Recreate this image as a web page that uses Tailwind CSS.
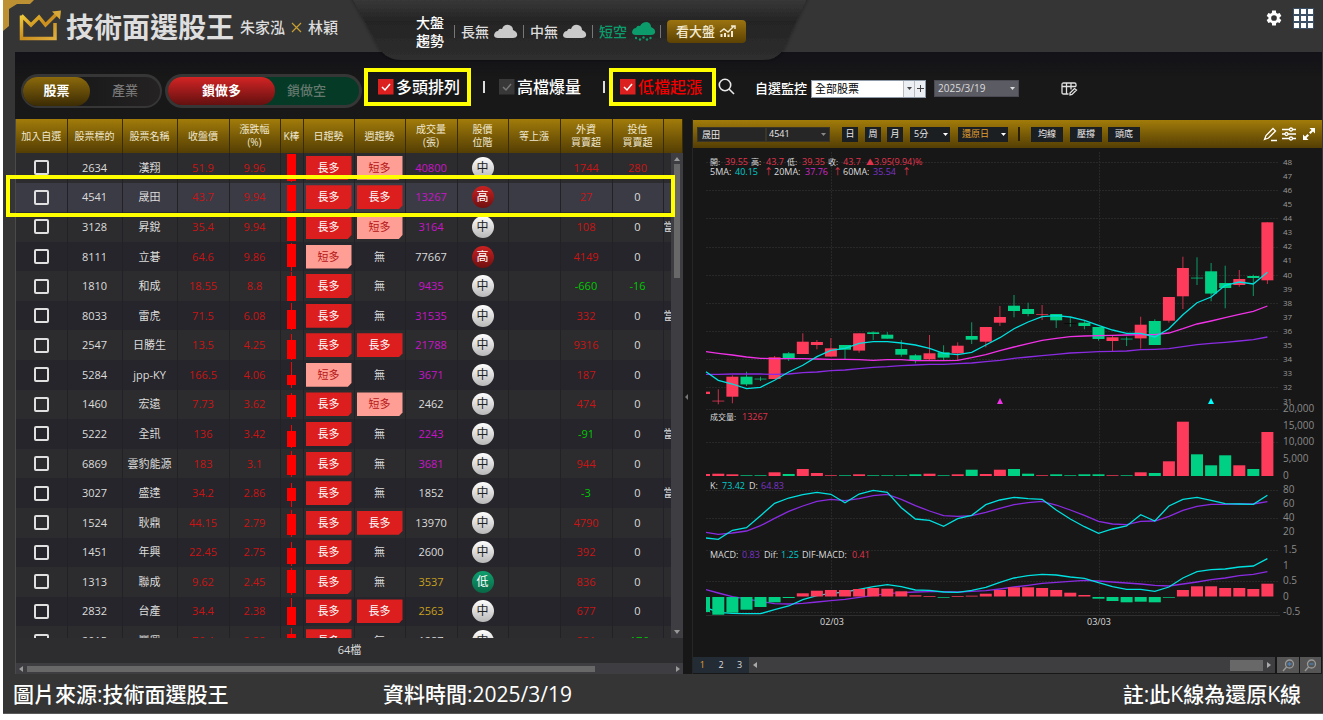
<!DOCTYPE html>
<html lang="zh-Hant">
<head>
  <meta charset="UTF-8">
  <meta name="viewport" content="width=device-width, initial-scale=1.0">
  <title>技術面選股王</title>
  <script src="https://cdn.jsdelivr.net/npm/@tailwindcss/browser@4"></script>
</head>
<body class="bg-white font-['Open_Sans','Noto_Sans_CJK_TC',sans-serif] text-[#dcdcdc]">
  <div class="relative flex flex-col h-screen pb-[6px] pl-[3px]">
    <div class="relative flex flex-col flex-1 min-h-0 bg-[#353535] border-b border-[#5a5a5a]">

      <!-- Header -->
      <header class="relative flex items-center h-[52px] shrink-0 pl-4 pr-[9px]">
        <svg class="absolute left-0 top-0" width="32" height="32" viewBox="0 0 32 32">
          <defs>
            <linearGradient id="gold" x1="0" y1="0" x2="1" y2="1">
              <stop offset="0" stop-color="#f4d03c"/><stop offset=".5" stop-color="#c98d1c"/><stop offset="1" stop-color="#e0b040"/>
            </linearGradient>
          </defs>
          <path d="M0 0H31L27 4H14L6 9V26L0 31Z" fill="#bd9034"/>
        </svg>
        <svg width="43" height="32" viewBox="0 0 43 32" class="relative">
          <path d="M2.500 5.500V28.500H36V13M2.500 5.500L12 15L20 7L26.500 15L38 3.500" fill="none" stroke="url(#gold)" stroke-width="3.500"/>
          <path d="M33 1.500L42 0.500L41 9.500Z" fill="#d9a93a"/>
        </svg>
        <h1 class="ml-1 pt-[2px] text-[28px] leading-8 font-bold text-[#dedede] whitespace-nowrap">技術面選股王</h1>
        <p class="ml-[6px] pt-[2px] flex items-center text-[15px] font-medium whitespace-nowrap">朱家泓
          <svg class="mx-[6px]" width="11" height="11" viewBox="0 0 11 11"><path d="M1 1L10 10M10 1L1 10" stroke="#c9a030" stroke-width="1.200"/></svg>林穎</p>

        <div class="absolute left-[347px] top-0 w-[464px] h-[62px] z-10">
          <svg class="absolute inset-0" width="464" height="62" viewBox="0 0 464 62">
            <defs>
              <linearGradient id="tray" x1="0" y1="0" x2="0" y2="1">
                <stop offset="0" stop-color="#3b3b3b"/><stop offset=".4" stop-color="#242424"/><stop offset="1" stop-color="#2e2e2e"/>
              </linearGradient>
              <filter id="trayShadow" x="-5%" y="-5%" width="110%" height="115%"><feDropShadow dx="0" dy="0" stdDeviation="2" flood-color="#000" flood-opacity=".45"/></filter>
            </defs>
            <path d="M1 -4L28 46Q35 60 52 60H412Q427 60 433 50L458 -4Z" fill="url(#tray)" filter="url(#trayShadow)"/>
          </svg>
          <div class="relative flex items-center h-[63px] pl-[66px] text-sm font-medium whitespace-nowrap">
            <span class="leading-[18px] text-white">大盤<br>趨勢</span>
            <i class="ml-[10px] w-px h-[13px] bg-[#777]"></i>
            <span class="ml-[6px]">長無</span>
            <svg class="ml-[5px]" width="24" height="15" viewBox="0 0 24 15"><path d="M4 14Q0 14 0 11Q1 7 4 7Q5 4 8 5Q10 0 15 1Q19 2 19 6Q24 8 23 12Q22 14 19 14Z" fill="#c9c9c9"/></svg>
            <i class="ml-[5px] w-px h-[13px] bg-[#777]"></i>
            <span class="ml-[6px]">中無</span>
            <svg class="ml-[5px]" width="24" height="15" viewBox="0 0 24 15"><path d="M4 14Q0 14 0 11Q1 7 4 7Q5 4 8 5Q10 0 15 1Q19 2 19 6Q24 8 23 12Q22 14 19 14Z" fill="#c9c9c9"/></svg>
            <i class="ml-[5px] w-px h-[13px] bg-[#777]"></i>
            <span class="ml-[6px] text-[#0c9c6c]">短空</span>
            <svg class="ml-[5px]" width="24" height="20" viewBox="0 0 24 20"><g fill="#0c9c6c"><path d="M4 13Q0 13 0 10Q1 6 4 6Q5 3 8 4Q10 0 15 0Q19 1 19 5Q24 7 23 11Q22 13 19 13Z"/><circle cx="4" cy="16" r="1.200"/><circle cx="8" cy="17.500" r="1.200"/><circle cx="11.500" cy="15.500" r="1.200"/><circle cx="15" cy="17.500" r="1.200"/><circle cx="18.500" cy="16" r="1.200"/></g></svg>
            <i class="ml-[4px] w-px h-[13px] bg-[#777]"></i>
            <button class="ml-[6px] flex items-center justify-center w-[79px] h-[23px] rounded bg-linear-to-b from-[#9c7410] to-[#5c4204] text-[13px] text-[#f3ead0]">看大盤
              <svg class="ml-1" width="18" height="13" viewBox="0 0 18 13" fill="none" stroke="#f3ead0"><path d="M1 7L5 4L9 7L15 1M12 1H16V4" stroke-width="1.500"/><path d="M2.500 9V12M6 8V12M9.500 9.500V12M13 6V12" stroke-width="2"/></svg>
            </button>
          </div>
        </div>

        <button class="ml-auto pb-4" aria-label="設定">
          <svg width="18" height="18" viewBox="0 0 24 24" fill="#fff"><path d="M19.430 12.980a7.800 7.800 0 0 0 0-1.960l2.400-1.800-2.300-4-2.700 1.200a7.500 7.500 0 0 0-1.900-1.100L14.500 2h-5l-.4 3.300a7.500 7.500 0 0 0-1.900 1.100L4.500 5.200l-2.300 4 2.400 1.800a7.800 7.800 0 0 0 0 2l-2.400 1.800 2.300 4 2.700-1.200a7.500 7.500 0 0 0 1.900 1.100l.4 3.300h5l.4-3.300a7.500 7.500 0 0 0 1.900-1.100l2.700 1.200 2.300-4zM12 15.800a3.800 3.800 0 1 1 0-7.600 3.800 3.800 0 0 1 0 7.600z"/></svg>
        </button>
        <button class="ml-[10px] pb-4" aria-label="選單">
          <svg width="21" height="21" viewBox="0 0 21 21"><path fill="#3d5166" d="M0 0H21V21H0Z"/><path fill="#fff" d="M1 1h5v5h-5zM8 1h5v5h-5zM15 1h5v5h-5zM1 8h5v5h-5zM8 8h5v5h-5zM15 8h5v5h-5zM1 15h5v5h-5zM8 15h5v5h-5zM15 15h5v5h-5z"/></svg>
        </button>
      </header>

      <main class="flex flex-col flex-1 min-h-0 ml-3 mr-[1px] bg-[#171717]">
        <!-- Filters -->
        <div class="flex items-center h-[67px] shrink-0 pt-[10px] pl-[6px] whitespace-nowrap bg-linear-to-b from-[#121218] to-[#181818] to-40%">
          <div class="flex w-[141px] h-[34px] p-[2px] pt-[3px] rounded-full bg-[#363636]">
            <div class="flex flex-1 rounded-full bg-linear-to-r from-[#141414] to-[#242222] text-[13px] font-medium">
              <button class="w-[67px] rounded-full bg-linear-to-b from-[#8c6a0c] to-[#3c2c04] font-bold text-white">股票</button>
              <button class="flex-1 text-[#777]">產業</button>
            </div>
          </div>
          <div class="flex ml-[3px] w-[197px] h-[34px] p-[3px] rounded-full bg-[#363636]">
            <div class="flex flex-1 rounded-full bg-[#043a26] text-[13px] font-medium">
              <button class="w-[107px] rounded-full bg-linear-to-b from-[#d42424] to-[#641010] font-bold text-white">鎖做多</button>
              <button class="px-3 text-[#64786e]">鎖做空</button>
            </div>
          </div>
          <label class="flex items-center ml-[2px] w-[107px] h-[38px] pl-[10px] -mt-2 border-4 border-[#ff0] text-base font-medium text-white">
            <input type="checkbox" checked class="absolute size-[15px] appearance-none">
            <svg class="mr-[2px]" width="16" height="16" viewBox="0 0 16 16"><path d="M0 0H15.500V15.500H0Z" fill="#dc2020"/><path d="M4 8L7 11L12 5" fill="none" stroke="#fff" stroke-width="1.500"/></svg>多頭排列
          </label>
          <i class="ml-3 -mt-2 w-[2px] h-[12px] bg-[#ddd]"></i>
          <label class="flex items-center ml-[14px] -mt-2 text-base font-medium text-white">
            <input type="checkbox" class="absolute size-[15px] appearance-none">
            <svg class="mr-[2px]" width="16" height="16" viewBox="0 0 16 16"><path d="M0 0H15.500V15.500H0Z" fill="#383838"/><path d="M4 8L7 11L12 5" fill="none" stroke="#777" stroke-width="1.500"/></svg>高檔爆量
          </label>
          <i class="ml-[22px] -mt-2 w-[2px] h-[12px] bg-[#ddd]"></i>
          <label class="flex items-center ml-[4px] w-[107px] h-[38px] pl-[7px] -mt-2 border-4 border-[#ff0] text-base font-medium text-[#f00000]">
            <input type="checkbox" checked class="absolute size-[15px] appearance-none">
            <svg class="mr-[2px]" width="16" height="16" viewBox="0 0 16 16"><path d="M0 0H15.500V15.500H0Z" fill="#dc2020"/><path d="M4 8L7 11L12 5" fill="none" stroke="#fff" stroke-width="1.500"/></svg>低檔起漲
          </label>
          <button class="ml-[2px] -mt-2" aria-label="搜尋"><svg width="17" height="17" viewBox="0 0 17 17" fill="none" stroke="#e8e8e8" stroke-width="1.600"><circle cx="7" cy="7" r="5.700"/><path d="M11 11L16 16"/></svg></button>
          <label for="watch" class="ml-[20px] -mt-1 text-[13px] font-medium text-white">自選監控</label>
          <div class="relative flex ml-1 -mt-1 h-[18px] w-[115px] border border-[#8f9aa8] bg-white">
            <select id="watch" class="w-full pl-[3px] appearance-none text-[11px] leading-4 text-black"><option>全部股票</option></select>
            <span class="pointer-events-none absolute right-[11px] inset-y-0 flex items-center justify-center w-[11px] border-l border-[#bbb] bg-[#eceff4]"><svg width="5" height="3"><path d="M0 0H5L2.500 3Z" fill="#444"/></svg></span>
            <button class="absolute right-0 inset-y-0 flex items-center justify-center w-[11px] border-l border-[#bbb] bg-[#eceff4]" aria-label="新增"><svg width="7" height="7"><path d="M0 3.500H7M3.500 0V7" stroke="#444"/></svg></button>
          </div>
          <div class="relative ml-2 -mt-1">
            <select aria-label="日期" class="block w-[85px] h-[17px] pl-[3px] appearance-none border border-[#4a4a52] bg-[#5b5b63] text-[10px] text-[#ddd]"><option>2025/3/19</option></select>
            <svg class="pointer-events-none absolute right-1 top-[7px]" width="5" height="3"><path d="M0 0H5L2.500 3Z" fill="#ddd"/></svg>
          </div>
          <button class="ml-[42px] -mt-1" aria-label="編輯欄位"><svg width="17" height="14" viewBox="0 0 17 14" fill="none" stroke="#e0e0e0" stroke-width="1.300"><path d="M7.500 12H2.500Q1 12 1 10.500V2.500Q1 1 2.500 1H13.500Q15 1 15 2.500V4.500M1 4.500H15M5.500 1V12M10 1V7.500"/><path d="M9 11L13.500 6.500L15.500 8L11 12.500L9 13Z"/></svg></button>
        </div>

        <div class="grid grid-cols-[668fr_639fr] flex-1 min-h-0">
          <!-- Stock list -->
          <section class="relative flex flex-col min-h-0 min-w-0 border-l border-[#4a4a4a] bg-[#2c2c2e]">
            <div class="relative flex-1 min-h-0 overflow-hidden">
              <table class="w-full h-[537px] table-fixed border-collapse text-center text-[11px] leading-[14px]">
                <colgroup>
                  <col class="w-[51px]"><col class="w-[55px]"><col class="w-[55px]"><col class="w-[52px]"><col class="w-[51px]"><col class="w-[23px]"><col class="w-[51px]"><col class="w-[51px]"><col class="w-[52px]"><col class="w-[51px]"><col class="w-[52px]"><col class="w-[52px]"><col class="w-[51px]"><col>
                </colgroup>
                <thead>
                  <tr class="h-[34px] bg-linear-to-b from-[#a27c0a] to-[#543e04] text-[10px] leading-[13px] text-[#f0e8d0] whitespace-nowrap [&>th]:border-r [&>th]:border-[#3a2c04] [&>th]:p-0 [&>th]:font-normal">
                    <th>加入自選</th><th>股票標的</th><th>股票名稱</th><th>收盤價</th><th>漲跌幅<br>(%)</th><th>K棒</th><th>日趨勢</th><th>週趨勢</th><th>成交量<br>(張)</th><th>股價<br>位階</th><th>等上漲</th><th>外資<br>買賣超</th><th>投信<br>買賣超</th><th></th>
                  </tr>
                </thead>
                <tbody id="stocks"></tbody>
              </table>
              <div class="absolute right-0 top-[34px] bottom-0 w-3 flex flex-col items-center justify-between bg-[#3e3e42] py-1">
                <svg width="6" height="4"><path d="M0 4H6L3 0Z" fill="#999"/></svg>
                <div class="absolute top-[11px] w-[6px] h-[114px] bg-[#686868]"></div>
                <svg width="6" height="4"><path d="M0 0H6L3 4Z" fill="#999"/></svg>
              </div>
            </div>
            <div class="h-[25px] shrink-0 text-center text-[11px] leading-6 bg-[#2d2d30]">64檔</div>
            <div class="flex items-center h-[11px] shrink-0 px-[3px] bg-[#3e3e42]">
              <svg width="4" height="6"><path d="M4 0V6L0 3Z" fill="#999"/></svg>
              <div class="ml-1 w-[86%] h-[6px] bg-[#686868]"></div>
              <svg class="ml-auto" width="4" height="6"><path d="M0 0V6L4 3Z" fill="#999"/></svg>
            </div>
            <div class="pointer-events-none absolute -left-[10px] right-2 top-[56px] h-[42px] border-4 border-[#ff0]"></div>
          </section>

          <!-- Chart -->
          <section class="flex min-w-0 min-h-0">
            <div class="flex items-center w-[10px] shrink-0 border-r border-[#262626]"><svg width="6" height="6"><path d="M5 0V6L2 3Z" fill="#777"/></svg></div>
            <div class="flex flex-col flex-1 min-w-0 pt-[1px]">
              <div class="flex items-center h-[28px] shrink-0 pl-1 pr-[6px] bg-linear-to-b from-[#a27c0a] to-[#543e04] text-[9px] leading-3 text-[#e8e8e8] whitespace-nowrap">
                <input aria-label="股票名稱" value="晟田" class="w-[69px] h-[15px] px-1 border border-[#3a3526] bg-[#262626]">
                <div class="relative">
                  <select aria-label="股票代號" class="block w-[64px] h-[15px] px-[2px] appearance-none border border-[#3a3526] bg-[#262626]"><option>4541</option></select>
                  <svg class="pointer-events-none absolute right-1 top-[6px]" width="5" height="3"><path d="M0 0H5L2.500 3Z" fill="#888"/></svg>
                </div>
                <button class="ml-3 w-4 h-[15px] bg-[#1c1f22]">日</button>
                <button class="ml-[7px] w-4 h-[15px] bg-[#1c1f22]">周</button>
                <button class="ml-[6px] w-4 h-[15px] bg-[#1c1f22]">月</button>
                <div class="relative ml-[7px]">
                  <select aria-label="分線" class="block w-[40px] h-[15px] px-1 appearance-none bg-[#1c1f22]"><option>5分</option></select>
                  <svg class="pointer-events-none absolute right-[2px] top-[6px]" width="5" height="3"><path d="M0 0H5L2.500 3Z" fill="#fff"/></svg>
                </div>
                <div class="relative ml-2">
                  <select aria-label="還原" class="block w-[50px] h-[15px] px-1 appearance-none bg-[#1c1f22] text-[#e0a030]"><option>還原日</option></select>
                  <svg class="pointer-events-none absolute right-[2px] top-[6px]" width="5" height="3"><path d="M0 0H5L2.500 3Z" fill="#fff"/></svg>
                </div>
                <i class="ml-[10px] w-[2px] h-[14px] bg-[#2a1e00]"></i>
                <button class="ml-[11px] w-8 h-[15px] bg-[#1c1f22]">均線</button>
                <button class="ml-[7px] w-8 h-[15px] bg-[#1c1f22]">壓撐</button>
                <button class="ml-[6px] w-8 h-[15px] bg-[#1c1f22]">頭底</button>
                <button class="ml-auto" aria-label="畫線"><svg width="15" height="15" viewBox="0 0 15 15" fill="none" stroke="#fff" stroke-width="1.300"><path d="M1.500 12.500L3 8.500L10 1.500L12.500 4L5.500 11ZM8 13.500H14"/></svg></button>
                <button class="ml-1" aria-label="參數"><svg width="14" height="14" viewBox="0 0 14 14" fill="none" stroke="#fff" stroke-width="1.300"><path d="M0 2.500H7.500M10.500 2.500H14M0 7H3M6 7H14M0 11.500H7.500M10.500 11.500H14"/><circle cx="9" cy="2.500" r="1.500"/><circle cx="4.500" cy="7" r="1.500"/><circle cx="9" cy="11.500" r="1.500"/></svg></button>
                <button class="ml-[6px]" aria-label="全螢幕"><svg width="14" height="14" viewBox="0 0 14 14"><path d="M7.500 1H13V6.500L11 4.500L8.500 7L7 5.500L9.500 3ZM6.500 13H1V7.500L3 9.500L5.500 7L7 8.500L4.500 11Z" fill="#fff"/></svg></button>
              </div>
              <div class="flex-1 min-h-0 mt-1">
                <svg id="chart" class="block w-full h-full" viewBox="693 152 628 505" preserveAspectRatio="xMinYMin meet" font-size="9"></svg>
              </div>
              <div class="flex items-stretch h-4 shrink-0 mb-[1px] text-[9px]">
                <div class="flex w-[56px] items-center justify-around bg-[#232b35]"><button class="text-[#e0a030]">1</button><button>2</button><button>3</button></div>
                <div class="flex flex-1 items-center px-1 bg-[#3e3e40]">
                  <svg width="4" height="6"><path d="M4 0V6L0 3Z" fill="#aaa"/></svg>
                  <div class="ml-auto w-[33px] h-[11px] bg-[#686868]"></div>
                  <svg class="ml-1" width="4" height="6"><path d="M0 0V6L4 3Z" fill="#aaa"/></svg>
                </div>
                <button class="ml-[2px] flex items-center justify-center w-[22px] bg-[#555]" aria-label="放大"><svg width="13" height="13" viewBox="0 0 13 13" fill="none" stroke="#999" stroke-width="1.300"><circle cx="7.500" cy="5" r="4"/><path d="M4.500 8L1 12"/><path d="M5.500 5H9.500M7.500 3V7" stroke="#4a7fb0"/></svg></button>
                <button class="ml-[1px] mr-[1px] flex items-center justify-center w-[21px] bg-[#555]" aria-label="縮小"><svg width="13" height="13" viewBox="0 0 13 13" fill="none" stroke="#999" stroke-width="1.300"><circle cx="7.500" cy="5" r="4"/><path d="M4.500 8L1 12"/><path d="M5.500 5H9.500" stroke="#4a7fb0"/></svg></button>
              </div>
            </div>
          </section>
        </div>
      </main>

      <footer class="grid grid-cols-[370px_1fr_auto] items-center h-[39px] shrink-0 pl-[10px] pr-[22px] text-[21px] leading-7 font-medium text-white whitespace-nowrap">
        <p>圖片來源:技術面選股王</p>
        <p>資料時間:2025/3/19</p>
        <p>註:此K線為還原K線</p>
      </footer>
    </div>
  </div>

  <script>
    // code, name, close, change %, candle [wick top, body top, body bottom, wick bottom], day, week, volume, volume color, level, foreign, trust, extra
    const stocks = [
      ['2634', '漢翔', '51.9', '9.96', [1, 1, 28, 29], '長多', '短多', '40800', 'p', '中', '1744', '280', ''],
      ['4541', '晟田', '43.7', '9.94', [2, 2, 28, 29], '長多', '長多', '13267', 'p', '高', '27', '0', ''],
      ['3128', '昇銳', '35.4', '9.94', [1, 2, 29, 29], '長多', '短多', '3164', 'p', '中', '108', '0', '當'],
      ['8111', '立碁', '64.6', '9.86', [1, 2, 25, 29], '短多', '無', '77667', 'w', '高', '4149', '0', ''],
      ['1810', '和成', '18.55', '8.8', [0, 4, 29, 30], '長多', '無', '9435', 'p', '中', '-660', '-16', ''],
      ['8033', '雷虎', '71.5', '6.08', [2, 9, 28, 30], '長多', '無', '31535', 'p', '中', '332', '0', '當'],
      ['2547', '日勝生', '13.5', '4.25', [3, 9, 28, 30], '長多', '長多', '21788', 'p', '中', '9316', '0', ''],
      ['5284', 'jpp-KY', '166.5', '4.06', [2, 15, 25, 28], '短多', '無', '3671', 'p', '中', '187', '0', ''],
      ['1460', '宏遠', '7.73', '3.62', [3, 5, 27, 29], '長多', '短多', '2462', 'w', '中', '474', '0', ''],
      ['5222', '全訊', '136', '3.42', [6, 12, 28, 30], '長多', '無', '2243', 'p', '中', '-91', '0', '當'],
      ['6869', '雲豹能源', '183', '3.1', [2, 6, 26, 28], '長多', '無', '3681', 'p', '中', '944', '0', ''],
      ['3027', '盛達', '34.2', '2.86', [4, 9, 22, 28], '長多', '無', '1852', 'w', '中', '-3', '0', '當'],
      ['1524', '耿鼎', '44.15', '2.79', [2, 6, 27, 29], '長多', '長多', '13970', 'w', '中', '4790', '0', ''],
      ['1451', '年興', '22.45', '2.75', [4, 10, 26, 28], '長多', '無', '2600', 'w', '中', '392', '0', ''],
      ['1313', '聯成', '9.62', '2.45', [1, 3, 26, 28], '長多', '無', '3537', 'y', '低', '836', '0', ''],
      ['2832', '台產', '34.4', '2.38', [1, 10, 28, 28], '長多', '長多', '2563', 'y', '中', '677', '0', ''],
      ['2015', '豐興', '76.4', '2.28', [1, 7, 28, 30], '長多', '無', '1287', 'w', '中', '221', '-176', ''],
    ];
    const volColor = { p: 'text-[#c814c8]', w: 'text-[#dcdcdc]', y: 'text-[#c8a01e]' };
    const levelColor = {
      '中': 'bg-linear-to-b from-white to-[#b8b8b8] text-[#222]',
      '高': 'bg-linear-to-b from-[#cc2020] to-[#701010] text-white',
      '低': 'bg-linear-to-b from-[#10a070] to-[#086846] text-white',
    };

    function trend(t) {
      if (t === '無') return '無';
      const color = t === '長多' ? 'bg-[#dc1e1e] text-white' : 'bg-[#ff9e94] text-[#b41414]';
      return `<div class="mx-[2px] h-6 leading-6 [clip-path:polygon(0_0,100%_0,100%_84%,92%_100%,0_100%)] ${color}">${t}</div>`;
    }
    function net(v) {
      const color = v === '0' ? 'text-[#dcdcdc]' : v.startsWith('-') ? 'text-[#00c800]' : 'text-[#c81414]';
      return `<td class="${color}">${v}</td>`;
    }

    document.getElementById('stocks').innerHTML = stocks.map((s, i) => {
      const [code, name, close, change, k, day, week, vol, vc, level, foreign, trust, extra] = s;
      const bg = i === 1 ? 'bg-[#3b3b46]' : i % 2 ? 'bg-[#25252b]' : 'bg-[#2c2c2e]';
      return `<tr class="${bg} whitespace-nowrap [&>td]:p-0 [&>td]:border-r [&>td]:border-[#222226]">
        <td><input type="checkbox" aria-label="加入自選 ${code}" class="block mx-auto size-[15px] appearance-none rounded-xs border-2 border-[#e0e0e0]"></td>
        <td>${code}</td><td>${name}</td>
        <td class="text-[#c81414]">${close}</td><td class="text-[#c81414]">${change}</td>
        <td><svg class="block mx-auto" width="9" height="29" viewBox="0 0 9 29"><path fill="#ff0000" d="M0 ${k[1]}H9V${k[2]}H0ZM4 ${k[0]}H5V${k[3]}H4Z"/></svg></td>
        <td>${trend(day)}</td><td>${trend(week)}</td>
        <td class="${volColor[vc]}">${vol}</td>
        <td><span class="block mx-auto size-[22px] rounded-full text-xs leading-[22px] ${levelColor[level]}">${level}</span></td>
        <td></td>${net(foreign)}${net(trust)}
        <td class="overflow-hidden text-left">${extra}</td></tr>`;
    }).join('');

    // Chart series, three units per pixel below each pane's top
    const RED = '#ff3b5c', GREEN = '#00d084', CYAN = '#00e0e0', PINK = '#f032e6', VIOLET = '#8a2be2';
    const candles = [
      'r 598 632 634 643', 'r 556 560 620 640', 'g 545 560 583 588', 'g 560 566 568 573', 'r 498 502 567 567',
      'g 486 490 505 513', 'r 430 455 492 492', 'r 450 456 465 478', 'r 444 475 500 500', 'g 465 465 479 508',
      'r 430 430 482 488', 'g 424 427 432 450', 'g 426 434 446 446', 'g 450 477 494 500', 'g 492 496 511 520',
      'r 435 490 508 511', 'g 466 487 503 511', 'r 457 467 490 511', 'g 397 438 449 462', 'r 411 411 455 472',
      'r 348 381 398 408', 'g 315 347 363 382', 'g 338 357 372 379', 'r 345 372 374 390', 'g 372 372 391 414',
      'k 382 399 401 410', 'g 393 398 408 418', 'g 411 411 447 452', 'r 437 442 453 486', 'g 440 446 448 468',
      'r 380 404 445 476', 'g 388 393 465 465', 'r 321 321 392 398', 'r 200 234 319 357', 'g 202 263 265 285',
      'g 219 244 311 334', 'g 227 279 294 355', 'r 240 267 285 290', 'g 254 258 264 318', 'r 97 97 271 282',
    ].map(c => c.split(' '));
    const ma5 = [545,571,582,596,592,571,546,526,500,481,475,460,455,455,459,465,475,490,494,487,465,443,416,396,380,377,381,391,406,420,430,430,441,416,374,338,321,286,276,282,247];
    const ma20 = [485,490,495,501,505,506,506,506,507,508,508,509,511,509,509,512,512,512,511,503,494,482,471,461,451,445,440,438,437,436,435,434,434,429,416,402,393,383,373,364,348];
    const ma60 = [553,553,552,552,552,553,552,548,546,542,540,536,532,530,527,525,523,523,521,519,515,511,505,501,497,493,489,487,485,484,483,479,478,476,470,464,460,457,453,449,441];
    const volume = [222,221,223,226,226,217,222,207,219,226,226,223,226,226,226,223,221,226,223,209,222,209,207,221,226,223,226,223,223,226,226,217,219,184,65,163,196,166,196,207,96];
    const kLine = [414,418,391,383,347,310,294,284,277,283,308,282,271,277,323,357,361,379,356,346,314,300,292,296,298,330,357,380,400,387,378,344,363,318,298,292,301,311,312,313,286];
    const dLine = [397,403,399,393,377,355,334,318,304,298,302,296,287,283,298,317,333,347,349,347,337,325,314,308,304,315,330,346,364,372,374,364,363,349,331,319,313,313,312,312,305];
    const osc = [636,644,638,629,621,607,594,580,572,570,570,567,564,566,574,586,588,592,588,587,581,570,562,562,564,570,578,585,596,603,607,605,607,593,570,559,559,564,564,567,551];
    const dif = [623,637,640,641,641,629,618,599,587,580,576,568,560,554,560,570,571,576,577,571,562,547,534,527,523,525,531,535,548,560,568,568,574,561,534,515,509,507,501,498,476];
    const macd = [569,579,590,597,604,611,612,610,606,602,598,592,586,581,578,576,575,575,576,574,572,567,561,556,550,547,544,541,543,546,549,552,556,558,552,546,539,534,527,523,515];

    const x = i => i < 0 ? 706 : 718.3 + 14.08 * i;
    const price = v => 190 + v / 3;
    const lower = v => 400 + v / 3;
    const line = (data, y, color) =>
      `<polyline fill="none" stroke="${color}" stroke-width="1.300" points="${data.map((v, i) => x(i - 1).toFixed(1) + ',' + y(v).toFixed(1)).join(' ')}"/>`;
    const rect = (i, top, bottom, color) => {
      const left = i < 0 ? 706 : x(i) - 6;
      return `<rect x="${left.toFixed(1)}" y="${top.toFixed(1)}" width="${i < 0 ? 4 : 12}" height="${Math.max(bottom - top, 0.7).toFixed(1)}" fill="${color}"/>`;
    };
    const paint = { r: RED, g: GREEN, k: '#050505' };

    let svg = '';
    for (const y of [162, 190, 218, 247, 275, 303, 331, 359, 387, 409, 442, 490, 518, 550, 581, 612])
      svg += `<path d="M706 ${y}.5H1279" stroke="#282828" stroke-dasharray="2 1"/>`;
    svg += '<path d="M706 615.500H1280" stroke="#2e2e2e"/><path d="M831.500 152V615M1099.500 152V615" stroke="#282828" stroke-dasharray="2 1"/>';

    svg += rect(-1, 391.7, 394, RED);
    candles.forEach(([c, high, top, bottom, low], i) => {
      svg += `<path d="M${x(i).toFixed(1)} ${price(+high).toFixed(1)}V${price(+low).toFixed(1)}" stroke="${c === 'r' ? '#c8304a' : '#0c9a66'}"/>`;
      svg += rect(i, price(+top), price(+bottom), paint[c]);
    });
    svg += line(ma60, price, VIOLET) + line(ma20, price, PINK) + line(ma5, price, CYAN);
    svg += `<path d="M997 404L1000 398L1003 404Z" fill="${PINK}"/><path d="M1208 404L1211 398L1214 404Z" fill="#00ffff"/>`;

    volume.forEach((v, i) => {
      const c = i ? candles[i - 1][0] : 'r';
      svg += rect(i - 1, lower(v), 476, c === 'r' ? RED : GREEN);
    });
    svg += line(dLine, lower, VIOLET) + line(kLine, lower, CYAN);
    svg += line(macd, lower, VIOLET) + line(dif, lower, CYAN);
    osc.forEach((v, i) => {
      svg += v > 590 ? rect(i - 1, 597, lower(v), GREEN) : rect(i - 1, lower(v), 596.5, RED);
    });

    // Axis labels
    for (let p = 48; p >= 31; p--)
      svg += `<text x="1283" y="${Math.round(165 + (48 - p) * 14.07)}" font-size="8" fill="#999">${p}</text>`;
    [['20,000', 409], ['15,000', 426], ['10,000', 442], ['5,000', 459], ['0', 476], ['80', 490], ['60', 504], ['40', 518], ['20', 532], ['1.5', 550], ['1', 566], ['0.5', 581], ['0', 597], ['-0.5', 612]]
      .forEach(([t, y]) => svg += `<text x="1283" y="${y + 3}" font-size="10" fill="#8a8a8a">${t}</text>`);

    const W = '#dcdcdc', R = '#e0344e', C = '#00cccc', P = '#d028c8', V = '#7c34c8';
    [
      [165, [[710, '開:', W], [725, '39.55', R], [751, '高:', W], [766, '43.7', R], [787, '低:', W], [802, '39.35', R], [828, '收:', W], [843, '43.7', R], [866, '▲', R], [874, '3.95(9.94)%', R]]],
      [175, [[710, '5MA:', W], [735, '40.15', C], [764, '↑', R], [774, '20MA:', W], [805, '37.76', P], [833, '↑', R], [843, '60MA:', W], [873, '35.54', V], [902, '↑', R]]],
      [420, [[710, '成交量:', W], [742, '13267', R]]],
      [489, [[710, 'K:', W], [722, '73.42', C], [749, 'D:', W], [761, '64.83', V]]],
      [558, [[710, 'MACD:', W], [742, '0.83', V], [764, 'Dif:', W], [781, '1.25', C], [802, 'DIF-MACD:', W], [852, '0.41', R]]],
      [625, [[820, '02/03', W], [1087, '03/03', W]]],
    ].forEach(([y, parts]) => parts.forEach(([px, t, c]) => {
      // labels that start with a Chinese character run wider than the figures
      const size = /^[\u4e00-\u9fff▲]/.test(t) ? 8 : 9;
      svg += `<text x="${px}" y="${y}" font-size="${size}" fill="${c}">${t}</text>`;
    }));

    document.getElementById('chart').innerHTML = svg;
  </script>
</body>
</html>
